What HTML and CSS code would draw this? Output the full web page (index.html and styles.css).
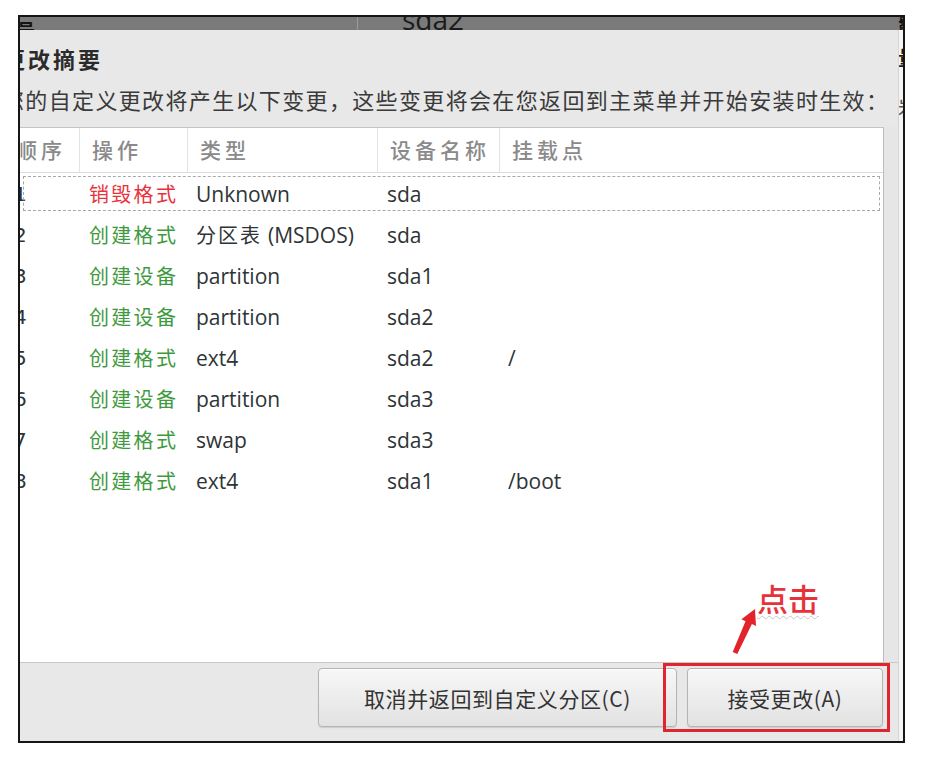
FILE: index.html
```html
<!DOCTYPE html>
<html lang="zh-CN">
<head>
<meta charset="utf-8">
<title>更改摘要</title>
<link rel="stylesheet" href="styles.css">
</head>
<body>
<div class="frame">
  <div class="topbar">
    <div class="tb-col1"><span class="tb-frag">号</span></div>
    <span class="tb-dev">sda2</span>
    <span class="tb-edge">鬣</span>
  </div>
  <div class="content">
    <div class="dialog">
      <div class="head">
        <h1 class="title">更改摘要</h1>
        <p class="subtitle">您的自定义更改将产生以下变更，这些变更将会在您返回到主菜单并开始安装时生效：</p>
      </div>
      <div class="tablezone">
        <div class="table">
          <div class="thead">
            <div class="th c1">顺序</div>
            <div class="th">操作</div>
            <div class="th">类型</div>
            <div class="th">设备名称</div>
            <div class="th last">挂载点</div>
          </div>
          <div class="tr focus">
            <div class="td c1">1</div>
            <div class="td op destroy">销毁格式</div>
            <div class="td">Unknown</div>
            <div class="td">sda</div>
            <div class="td"></div>
          </div>
          <div class="tr">
            <div class="td c1">2</div>
            <div class="td op create">创建格式</div>
            <div class="td"><span class="cjk">分区表</span> (MSDOS)</div>
            <div class="td">sda</div>
            <div class="td"></div>
          </div>
          <div class="tr">
            <div class="td c1">3</div>
            <div class="td op create">创建设备</div>
            <div class="td">partition</div>
            <div class="td">sda1</div>
            <div class="td"></div>
          </div>
          <div class="tr">
            <div class="td c1">4</div>
            <div class="td op create">创建设备</div>
            <div class="td">partition</div>
            <div class="td">sda2</div>
            <div class="td"></div>
          </div>
          <div class="tr">
            <div class="td c1">5</div>
            <div class="td op create">创建格式</div>
            <div class="td">ext4</div>
            <div class="td">sda2</div>
            <div class="td">/</div>
          </div>
          <div class="tr">
            <div class="td c1">6</div>
            <div class="td op create">创建设备</div>
            <div class="td">partition</div>
            <div class="td">sda3</div>
            <div class="td"></div>
          </div>
          <div class="tr">
            <div class="td c1">7</div>
            <div class="td op create">创建格式</div>
            <div class="td">swap</div>
            <div class="td">sda3</div>
            <div class="td"></div>
          </div>
          <div class="tr">
            <div class="td c1">8</div>
            <div class="td op create">创建格式</div>
            <div class="td">ext4</div>
            <div class="td">sda1</div>
            <div class="td">/boot</div>
          </div>
        </div>
        <div class="gutter"></div>
      </div>
      <div class="bar">
        <button class="btn cancel">取消并返回到自定义分区(C)</button>
        <button class="btn accept">接受更改(A)</button>
      </div>
    </div>
    <div class="sliver">
      <span class="sl-frag sl-a">量</span>
      <span class="sl-frag sl-b">岩</span>
    </div>
  </div>

  <div class="annot-box"></div>
  <div class="annot-text">点击</div>
  <svg class="annot-arrow" width="30" height="50" viewBox="0 0 30 50">
    <polygon points="23,2 24,19 19.9,17.1 5.3,47 0.7,45 13.5,14.2 9.4,12.3" fill="#e3232b"/>
  </svg>
</div>
</body>
</html>
```

FILE: styles.css
```css
body {
  margin: 0;
  background: #ffffff;
  font-family: "Open Sans", "Noto Sans CJK SC", sans-serif;
  color: #2e3436;
}

.frame {
  position: relative;
  margin: 15px 0 0 18px;
  width: 887px;
  height: 728px;
  box-sizing: border-box;
  border: 2px solid #161616;
  background: #e8e8e8;
  overflow: hidden;
  display: flex;
  flex-direction: column;
}

/* top clipped bar */
.topbar {
  height: 13px;
  flex: none;
  background: #7a7a7a;
  display: flex;
  align-items: flex-end;
  overflow: hidden;
}
.tb-col1 {
  width: 338px;
  height: 13px;
  box-sizing: border-box;
  border-right: 1px solid #9a9a9a;
  display: flex;
  align-items: flex-end;
  overflow: hidden;
}
.tb-frag {
  font-family: "Noto Sans CJK SC", sans-serif;
  font-weight: 700;
  font-size: 18px;
  line-height: 18px;
  color: #141414;
  margin-left: -3px;
  margin-bottom: -8px;
}
.tb-dev {
  font-family: "Open Sans", sans-serif;
  font-size: 28px;
  line-height: 28px;
  color: #1a1a1a;
  margin-left: 44px;
  margin-bottom: -3px;
}
.tb-edge {
  margin-left: auto;
  width: 5px;
  overflow: hidden;
  font-family: "Noto Sans CJK SC", sans-serif;
  font-weight: 700;
  font-size: 16px;
  line-height: 16px;
  color: #111;
  margin-bottom: -2px;
}

.content {
  flex: 1;
  display: flex;
  min-height: 0;
}

.dialog {
  width: 878px;
  flex: none;
  display: flex;
  flex-direction: column;
}

.head {
  height: 97px;
  flex: none;
  overflow: hidden;
}
.title {
  margin: 13px 0 0 -17px;
  font-family: "Noto Sans CJK SC", sans-serif;
  font-size: 22px;
  font-weight: 700;
  line-height: 30px;
  letter-spacing: 3px;
  color: #2b2b2b;
  white-space: nowrap;
}
.subtitle {
  margin: 11px 0 0 -18px;
  font-family: "Noto Sans CJK SC", sans-serif;
  font-size: 22px;
  line-height: 30px;
  letter-spacing: 1.35px;
  color: #3a3a3a;
  white-space: nowrap;
}

.tablezone {
  height: 535px;
  flex: none;
  display: flex;
}
.table {
  width: 864px;
  flex: none;
  box-sizing: border-box;
  background: #ffffff;
  border-top: 1px solid #c4c4c4;
  border-right: 1px solid #bcbcbc;
  overflow: hidden;
}
.gutter {
  flex: 1;
  background: #e6e6e6;
}

.thead,
.tr {
  display: grid;
  grid-template-columns: 60px 108px 190px 122px 1fr;
}
.thead {
  height: 45px;
  box-sizing: border-box;
  border-bottom: 1px solid #dcdcdc;
}
.th {
  display: flex;
  align-items: center;
  padding: 0 0 3px 12px;
  border-right: 1px solid #e4e4e4;
  font-family: "Noto Sans CJK SC", sans-serif;
  font-size: 21px;
  font-weight: 500;
  letter-spacing: 4px;
  color: #8a8a8a;
  white-space: nowrap;
}
.th.c1 {
  padding-left: 0;
  margin-left: -4px;
}
.th.last {
  border-right: none;
}

.tr {
  height: 41px;
}
.tr.focus {
  outline: 1px dashed #a8a8a8;
  outline-offset: -4px;
}
.td {
  display: flex;
  align-items: center;
  padding-left: 9px;
  font-size: 21px;
  color: #2e3436;
  white-space: nowrap;
}
.td.c1 {
  padding-left: 0;
  margin-left: -6px;
  font-family: "DejaVu Sans", sans-serif;
  font-size: 20px;
}
.td:nth-child(3),
.td:nth-child(5) {
  padding-left: 8px;
}
.op {
  font-family: "Noto Sans CJK SC", sans-serif;
  font-size: 20px;
  letter-spacing: 2.3px;
}
.destroy {
  color: #e8333d;
}
.create {
  color: #3f9a3f;
}
.cjk {
  font-family: "Noto Sans CJK SC", sans-serif;
  font-size: 20px;
  letter-spacing: 2px;
  margin-right: 6px;
}

/* button bar */
.bar {
  flex: 1;
  box-sizing: border-box;
  border-top: 1px solid #c8c8c8;
  display: flex;
  justify-content: flex-end;
  align-items: flex-start;
  gap: 10px;
  padding: 5px 15px 0 0;
}
.btn {
  height: 59px;
  box-sizing: border-box;
  border: 1px solid #b4b4b4;
  border-radius: 4px;
  background: linear-gradient(#f7f7f7, #e2e2e2);
  box-shadow: inset 0 1px 0 #ffffff, 0 1px 1px rgba(0, 0, 0, 0.12);
  font-family: "Noto Sans CJK SC", sans-serif;
  font-size: 21px;
  letter-spacing: 0.6px;
  color: #333333;
  padding: 0;
}
.cancel {
  width: 359px;
}
.accept {
  width: 196px;
}

/* right clipped sliver */
.sliver {
  flex: 1;
  background: #f4f4f4;
  border-left: 1px solid #d6d6d6;
  overflow: hidden;
  display: flex;
  flex-direction: column;
}
.sl-frag {
  font-family: "Noto Sans CJK SC", sans-serif;
  font-weight: 700;
  font-size: 20px;
  line-height: 20px;
  color: #1a1a1a;
  margin-left: -1px;
  white-space: nowrap;
}
.sl-a {
  margin-top: 18px;
}
.sl-b {
  margin-top: 30px;
  font-weight: 400;
  color: #555;
}

/* annotations */
.annot-box {
  position: absolute;
  left: 643px;
  top: 646px;
  width: 227px;
  height: 69px;
  box-sizing: border-box;
  border: 3px solid #e0262c;
}
.annot-text {
  position: absolute;
  left: 737px;
  top: 565px;
  font-family: "Noto Sans CJK SC", sans-serif;
  font-size: 31px;
  line-height: 31px;
  font-weight: 500;
  color: #e8323a;
  text-decoration: underline wavy #c6c6c6;
  text-decoration-thickness: 1px;
  text-underline-offset: 4px;
}
.annot-arrow {
  position: absolute;
  left: 712px;
  top: 590px;
}
```
